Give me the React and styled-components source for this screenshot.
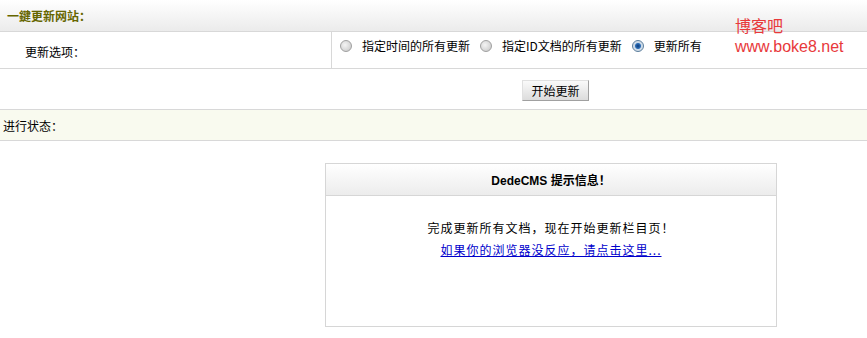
import React from "react";
import styled, { createGlobalStyle } from "styled-components";

const Global = createGlobalStyle`
  html, body { margin: 0; padding: 0; background: #fff; }
  body { font-family: "Noto Sans CJK SC", "Liberation Sans", sans-serif; font-size: 12px; color: #000; }
`;

const Page = styled.div`
  position: relative;
  width: 867px;
  height: 338px;
  overflow: hidden;
`;

const TitleBar = styled.div`
  height: 31px;
  border-bottom: 1px solid #d8d8d8;
  background: linear-gradient(#ffffff, #ebebeb);
  display: flex;
  align-items: center;
  padding-left: 7px;
  font-weight: bold;
  color: #666600;
  font-size: 12px;
`;

const OptionRow = styled.div`
  display: flex;
  height: 36px;
  border-bottom: 1px solid #d8d8d8;
`;

const LabelCell = styled.div`
  width: 332px;
  border-right: 1px solid #d8d8d8;
  display: flex;
  align-items: center;
  padding-left: 25px;
  box-sizing: border-box;
  padding-top: 2px;
`;

const OptionsCell = styled.div`
  display: flex;
  align-items: flex-start;
  padding-top: 7px;
  padding-left: 8px;
`;

const RadioLabel = styled.label`
  display: flex;
  align-items: center;
  margin-right: 10px;
  line-height: 14px;
`;

const RadioDot = styled.span`
  width: 12px;
  height: 12px;
  border-radius: 50%;
  box-sizing: border-box;
  border: 1px solid ${(p) => (p.$checked ? "#5a7d9c" : "#a0a0a0")};
  background: ${(p) =>
    p.$checked
      ? "radial-gradient(circle at 50% 50%, #0a3a7a 0, #2b6cb4 2.5px, #c8d8e8 3.5px, #e8e8e8 100%)"
      : "radial-gradient(circle at 40% 40%, #f4f4f4 0, #d8d8d8 60%, #bcbcbc 100%)"};
  margin-right: 10px;
`;

const ButtonRow = styled.div`
  height: 40px;
  display: flex;
  align-items: center;
  padding-left: 522px;
`;

const Button = styled.button`
  font-family: inherit;
  font-size: 12px;
  height: 21px;
  width: 67px;
  padding: 0;
  border: 1px solid #a0a0a0;
  border-top-color: #e0e0e0;
  border-left-color: #e0e0e0;
  background: linear-gradient(#fafafa, #dcdcdc);
  color: #000;
  margin-top: 2px;
`;

const StatusRow = styled.div`
  height: 30px;
  border-top: 1px solid #d8d8d8;
  border-bottom: 1px solid #d8d8d8;
  background: #f9faef;
  display: flex;
  align-items: center;
  padding-left: 3px;
`;

const MessageWrap = styled.div`
  padding-top: 22px;
  padding-left: 325px;
`;

const MessageBox = styled.div`
  width: 452px;
  height: 164px;
  box-sizing: border-box;
  border: 1px solid #d6d6d6;
  display: flex;
  flex-direction: column;
`;

const MessageHead = styled.div`
  height: 31px;
  border-bottom: 1px solid #d6d6d6;
  background: linear-gradient(#ffffff, #ececec);
  display: flex;
  align-items: center;
  justify-content: center;
  font-weight: bold;
  font-family: "Liberation Sans", "Noto Sans CJK SC", sans-serif;
`;

const MessageBody = styled.div`
  padding-top: 21px;
  display: flex;
  flex-direction: column;
  align-items: center;
  line-height: 22px;
  letter-spacing: 1px;
`;

const Link = styled.a`
  color: #0000cc;
  text-decoration: underline;
`;

const Watermark = styled.div`
  position: absolute;
  left: 735px;
  top: 17px;
  color: #e8393b;
  font-family: "Liberation Sans", "Noto Sans CJK SC", sans-serif;
  font-size: 16px;
  line-height: 20px;
`;

const Radio = ({ checked, children }) => (
  <RadioLabel>
    <RadioDot $checked={checked} />
    {children}
  </RadioLabel>
);

export default function App() {
  return (
    <Page>
      <Global />
      <TitleBar>一鍵更新网站：</TitleBar>
      <OptionRow>
        <LabelCell>更新选项：</LabelCell>
        <OptionsCell>
          <Radio>指定时间的所有更新</Radio>
          <Radio>指定ID文档的所有更新</Radio>
          <Radio checked>更新所有</Radio>
        </OptionsCell>
      </OptionRow>
      <ButtonRow>
        <Button>开始更新</Button>
      </ButtonRow>
      <StatusRow>进行状态：</StatusRow>
      <MessageWrap>
        <MessageBox>
          <MessageHead>DedeCMS 提示信息！</MessageHead>
          <MessageBody>
            <div>完成更新所有文档，现在开始更新栏目页！</div>
            <Link href="#">如果你的浏览器没反应，请点击这里...</Link>
          </MessageBody>
        </MessageBox>
      </MessageWrap>
      <Watermark>
        博客吧
        <br />
        www.boke8.net
      </Watermark>
    </Page>
  );
}
